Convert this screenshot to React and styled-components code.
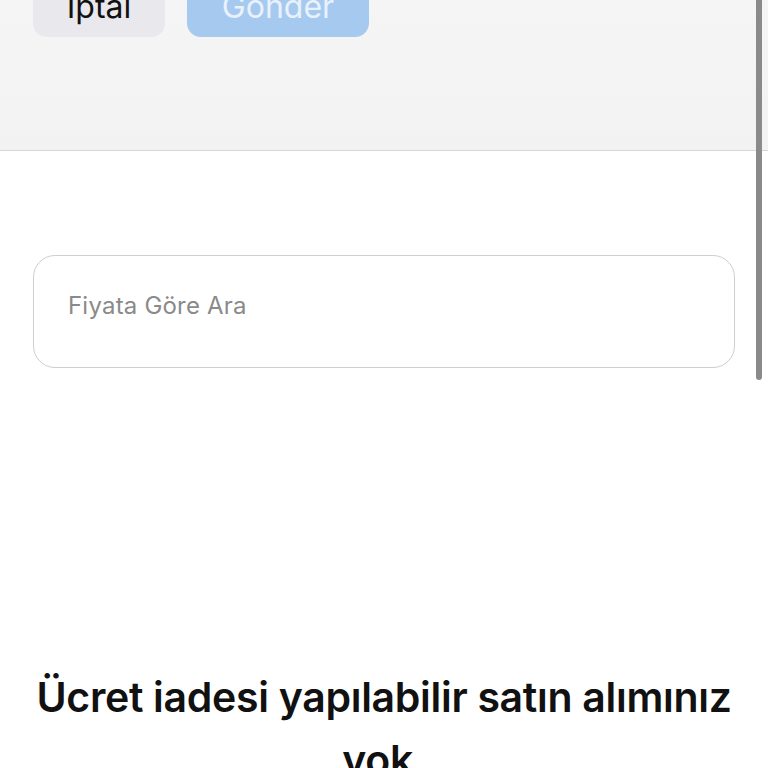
import React from 'react';
import styled, { createGlobalStyle } from 'styled-components';

const GlobalStyle = createGlobalStyle`
  html, body {
    margin: 0;
    padding: 0;
    background: #ffffff;
  }
  body {
    font-family: Inter, "Liberation Sans", Arial, sans-serif;
    width: 768px;
    height: 768px;
    overflow: hidden;
  }
`;

const Page = styled.div`
  position: relative;
  width: 768px;
  height: 768px;
  overflow: hidden;
  background: #ffffff;
`;

const Header = styled.div`
  display: flex;
  flex-direction: column;
  height: 150px;
  padding: 0 33px;
  background: linear-gradient(180deg, #f5f5f5, #f2f2f2);
  border-bottom: 1px solid #d6d6d6;
`;

const ButtonRow = styled.div`
  display: flex;
  gap: 22px;
  margin-top: -25px;
`;

const ActionButton = styled.button`
  height: 62px;
  width: ${({ $width }) => $width}px;
  border: none;
  border-radius: 14px;
  font-family: Inter, "Liberation Sans", Arial, sans-serif;
  font-size: 32px;
  padding: 0;
  background: ${({ $primary }) => ($primary ? '#a6c9ef' : '#e8e8ed')};
  color: ${({ $primary }) => ($primary ? '#e9f2fc' : '#111111')};
`;

const Content = styled.div`
  padding: 104px 33px 0 33px;
`;

const SearchBox = styled.div`
  height: 113px;
  border: 1.5px solid #cfcfcf;
  border-radius: 22px;
  display: flex;
  align-items: center;
  padding: 0 34px 12px;
  box-sizing: border-box;
`;

const Placeholder = styled.span`
  font-size: 24px;
  color: #8a8a8a;
  letter-spacing: 0.2px;
`;

const EmptyTitle = styled.h2`
  margin: 298px -10px 0 -10px;
  text-align: center;
  font-size: 41px;
  line-height: 63px;
  font-weight: 600;
  color: #111111;
  letter-spacing: -0.3px;
`;

const Scrollbar = styled.div`
  position: absolute;
  top: -10px;
  right: 6px;
  width: 6px;
  height: 390px;
  border-radius: 3px;
  background: #8a8a8a;
`;

const App = () => {
  return (
    <Page>
      <GlobalStyle />
      <Header>
        <ButtonRow>
          <ActionButton $width={132}>İptal</ActionButton>
          <ActionButton $width={182} $primary>Gönder</ActionButton>
        </ButtonRow>
      </Header>
      <Content>
        <SearchBox>
          <Placeholder>Fiyata Göre Ara</Placeholder>
        </SearchBox>
        <EmptyTitle>Ücret iadesi yapılabilir satın alımınız yok.</EmptyTitle>
      </Content>
      <Scrollbar />
    </Page>
  );
};

export default App;
